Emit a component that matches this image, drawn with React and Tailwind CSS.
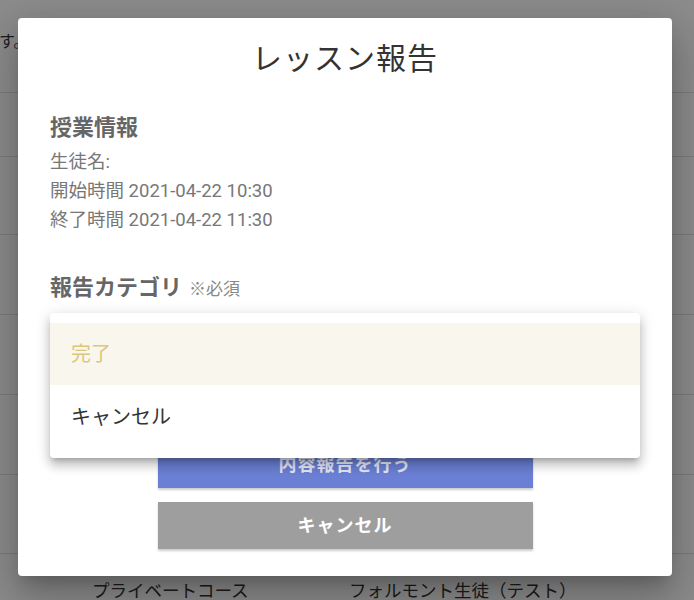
export default function App() {
  const font = { fontFamily: 'Roboto, "Noto Sans CJK JP", sans-serif' }
  return (
    <div className="relative h-[600px] w-[694px] overflow-hidden bg-white" style={font}>
      {/* page beneath the dialog */}
      <div className="flex flex-col text-[#333]">
        <div className="flex h-[93px] items-start border-b border-[#e0e0e0] pt-[31px]">
          <p className="-ml-[1px] text-[16px] leading-[22px]">す。</p>
        </div>
        <div className="h-[64px] border-b border-[#e0e0e0]" />
        <div className="h-[78px] border-b border-[#e0e0e0]" />
        <div className="h-[80px] border-b border-[#e0e0e0]" />
        <div className="h-[80px] border-b border-[#e0e0e0]" />
        <div className="h-[80px] border-b border-[#e0e0e0]" />
        <div className="h-[79px] border-b border-[#e0e0e0]" />
        <div className="flex pt-[25px] text-[17.5px] leading-[24px]">
          <span className="ml-[92px] w-[257px]">プライベートコース</span>
          <span>フォルモント生徒（テスト）</span>
        </div>
      </div>

      <div className="absolute inset-0 bg-black/45" />

      {/* dialog */}
      <div className="absolute left-[18px] top-[18px] flex h-[558px] w-[654px] flex-col rounded-[4px] bg-white px-[32px] pt-[21px] shadow-[0_11px_15px_-7px_rgba(0,0,0,0.2),0_24px_38px_3px_rgba(0,0,0,0.14),0_9px_46px_8px_rgba(0,0,0,0.12)]">
        <h2 className="text-center text-[30px] leading-[40px] tracking-[1px] text-[#333]">レッスン報告</h2>

        <h3 className="mt-[34px] text-[22px] font-bold leading-[30px] text-[#666]">授業情報</h3>
        <div className="mt-[5px] text-[18.5px] leading-[29px] text-[#777]">
          <p>生徒名:</p>
          <p>開始時間 2021-04-22 10:30</p>
          <p>終了時間 2021-04-22 11:30</p>
        </div>

        <div className="mt-[38px] flex items-baseline gap-[7px] leading-[30px]">
          <span className="text-[22px] font-bold text-[#666]">報告カテゴリ</span>
          <span className="text-[17px] text-[#888]">※必須</span>
        </div>

        <div className="mt-[9px] h-[56px] border-b border-[#bbb]" />

        <div className="mt-[72px] flex flex-col items-center gap-[14px]">
          <button className="h-[47px] w-[375px] bg-[#6b7fd4] text-[18px] font-bold tracking-[1px] text-[#e4e7f7] shadow-[0_2px_2px_rgba(0,0,0,0.2)]">
            内容報告を行う
          </button>
          <button className="h-[47px] w-[375px] bg-[#9e9e9e] text-[18px] font-bold tracking-[1px] text-white shadow-[0_2px_2px_rgba(0,0,0,0.2)]">
            キャンセル
          </button>
        </div>
      </div>

      {/* open select menu */}
      <div className="absolute left-[50px] top-[313px] w-[590px] rounded-[4px] bg-white py-[10px] shadow-[0_5px_5px_-3px_rgba(0,0,0,0.2),0_8px_10px_1px_rgba(0,0,0,0.14),0_3px_14px_2px_rgba(0,0,0,0.12)]">
        <div className="flex h-[62px] items-center bg-[#f9f6ee] px-[21px] text-[20px] text-[#dcc67c]">完了</div>
        <div className="flex h-[63px] items-center px-[21px] text-[20px] text-[#333]">キャンセル</div>
      </div>
    </div>
  )
}
